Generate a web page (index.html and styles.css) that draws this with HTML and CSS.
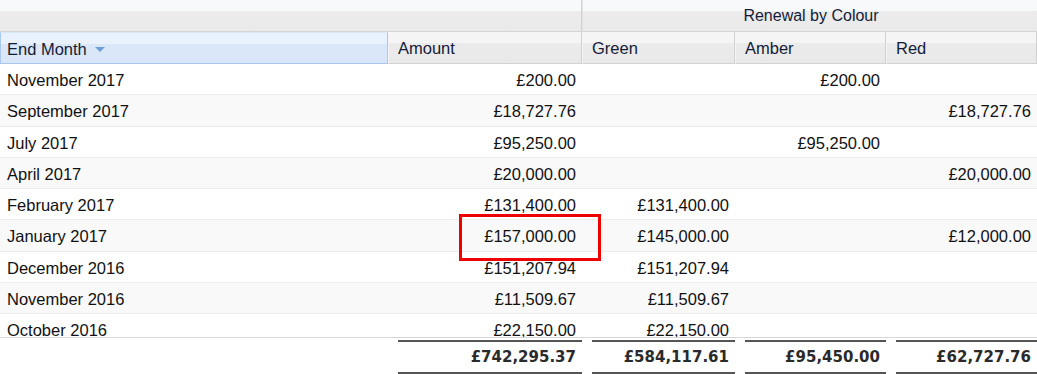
FILE: index.html
```html
<!DOCTYPE html>
<html>
<head>
<meta charset="utf-8">
<link rel="stylesheet" href="styles.css">
</head>
<body>
<div class="grid">
  <div class="hdr1">
    <div class="h1cell h1-left"></div>
    <div class="h1cell h1-group">Renewal by Colour</div>
  </div>
  <div class="hdr2">
    <div class="hcell sorted">End Month <span class="arrow"></span></div>
    <div class="hcell">Amount</div>
    <div class="hcell">Green</div>
    <div class="hcell">Amber</div>
    <div class="hcell">Red</div>
  </div>
  <div class="body">
    <div class="row"><div class="c">November 2017</div><div class="c n">£200.00</div><div class="c n"></div><div class="c n">£200.00</div><div class="c n"></div></div>
    <div class="row alt"><div class="c">September 2017</div><div class="c n">£18,727.76</div><div class="c n"></div><div class="c n"></div><div class="c n">£18,727.76</div></div>
    <div class="row"><div class="c">July 2017</div><div class="c n">£95,250.00</div><div class="c n"></div><div class="c n">£95,250.00</div><div class="c n"></div></div>
    <div class="row alt"><div class="c">April 2017</div><div class="c n">£20,000.00</div><div class="c n"></div><div class="c n"></div><div class="c n">£20,000.00</div></div>
    <div class="row"><div class="c">February 2017</div><div class="c n">£131,400.00</div><div class="c n">£131,400.00</div><div class="c n"></div><div class="c n"></div></div>
    <div class="row alt"><div class="c">January 2017</div><div class="c n">£157,000.00</div><div class="c n">£145,000.00</div><div class="c n"></div><div class="c n">£12,000.00</div></div>
    <div class="row"><div class="c">December 2016</div><div class="c n">£151,207.94</div><div class="c n">£151,207.94</div><div class="c n"></div><div class="c n"></div></div>
    <div class="row alt"><div class="c">November 2016</div><div class="c n">£11,509.67</div><div class="c n">£11,509.67</div><div class="c n"></div><div class="c n"></div></div>
    <div class="row"><div class="c">October 2016</div><div class="c n">£22,150.00</div><div class="c n">£22,150.00</div><div class="c n"></div><div class="c n"></div></div>
  </div>
  <div class="totals">
    <div class="t empty"></div>
    <div class="t"><span class="tv">£742,295.37</span></div>
    <div class="t"><span class="tv">£584,117.61</span></div>
    <div class="t"><span class="tv">£95,450.00</span></div>
    <div class="t"><span class="tv">£62,727.76</span></div>
  </div>
  <div class="highlight"></div>
</div>
</body>
</html>
```

FILE: styles.css
```css
html, body {
  margin: 0;
  padding: 0;
  background: #ffffff;
}
.grid {
  position: relative;
  width: 1037px;
  height: 374px;
  overflow: hidden;
  font-family: "Liberation Sans", Arial, sans-serif;
  font-size: 16.5px;
  color: #111111;
}
.hdr1 {
  display: grid;
  grid-template-columns: 582px 455px;
  height: 32px;
}
.h1cell {
  box-sizing: border-box;
  height: 32px;
  background: linear-gradient(#f8f9fb 0%, #f8f9fb 35%, #ececec 36%, #eaeaea 100%);
  border-bottom: 1px solid #d4d4d4;
}
.h1-left {
  border-right: 1px solid #d4d4d4;
}
.h1-group {
  border-left: 1px solid #e2e2e2;
  text-align: center;
  font-size: 16px;
  line-height: 32px;
  color: #141c38;
  padding-left: 2px;
}
.hdr2 {
  display: grid;
  grid-template-columns: 388px 194px 153px 151px 151px;
  height: 32px;
}
.hcell {
  box-sizing: border-box;
  height: 32px;
  padding-left: 9px;
  padding-top: 1px;
  line-height: 30px;
  color: #141c38;
  background: linear-gradient(#f5f5f6 0%, #f5f5f6 35%, #ebebeb 36%, #e9e9e9 100%);
  border-right: 1px solid #d2d2d2;
  border-left: 1px solid #f4f4f4;
  border-bottom: 1px solid #d2d2d2;
}
.hcell.sorted {
  padding-left: 6px;
  background: linear-gradient(#e9f1fc 0%, #e9f1fc 35%, #dae7f8 36%, #d8e6f8 100%);
  border: 1px solid #a9c8ee;
  border-top-color: #dbe8f8;
}
.arrow {
  display: inline-block;
  width: 0;
  height: 0;
  margin-left: 4px;
  vertical-align: 3px;
  border-left: 5px solid transparent;
  border-right: 5px solid transparent;
  border-top: 5px solid #6d9fd6;
}
.body {
  box-sizing: border-box;
  height: 274px;
  overflow: hidden;
  border-bottom: 1px solid #d6d6d6;
}
.row {
  box-sizing: border-box;
  display: grid;
  grid-template-columns: 388px 194px 153px 151px 151px;
  height: 31.25px;
  border-bottom: 1px solid #ececec;
  background: #ffffff;
}
.row.alt {
  background: #f9f9f9;
}
.c {
  padding-top: 2px;
  line-height: 28px;
  padding-left: 7px;
  white-space: nowrap;
}
.c.n {
  text-align: right;
  padding-left: 0;
  padding-right: 6px;
}
.totals {
  display: grid;
  grid-template-columns: 388px 194px 153px 151px 151px;
  padding-top: 2px;
}
.t {
  box-sizing: border-box;
  margin-left: 10px;
  height: 34px;
  border-top: 2px solid #555555;
  border-bottom: 2px solid #555555;
  text-align: right;
  padding-right: 6px;
  font-family: "DejaVu Sans", Verdana, sans-serif;
  font-weight: bold;
  font-size: 15px;
  line-height: 30px;
  color: #2a2a2a;
}
.t.empty {
  border: none;
}
.highlight {
  position: absolute;
  left: 459px;
  top: 214px;
  width: 142px;
  height: 47px;
  box-sizing: border-box;
  border: 3px solid #ee0000;
}
```
